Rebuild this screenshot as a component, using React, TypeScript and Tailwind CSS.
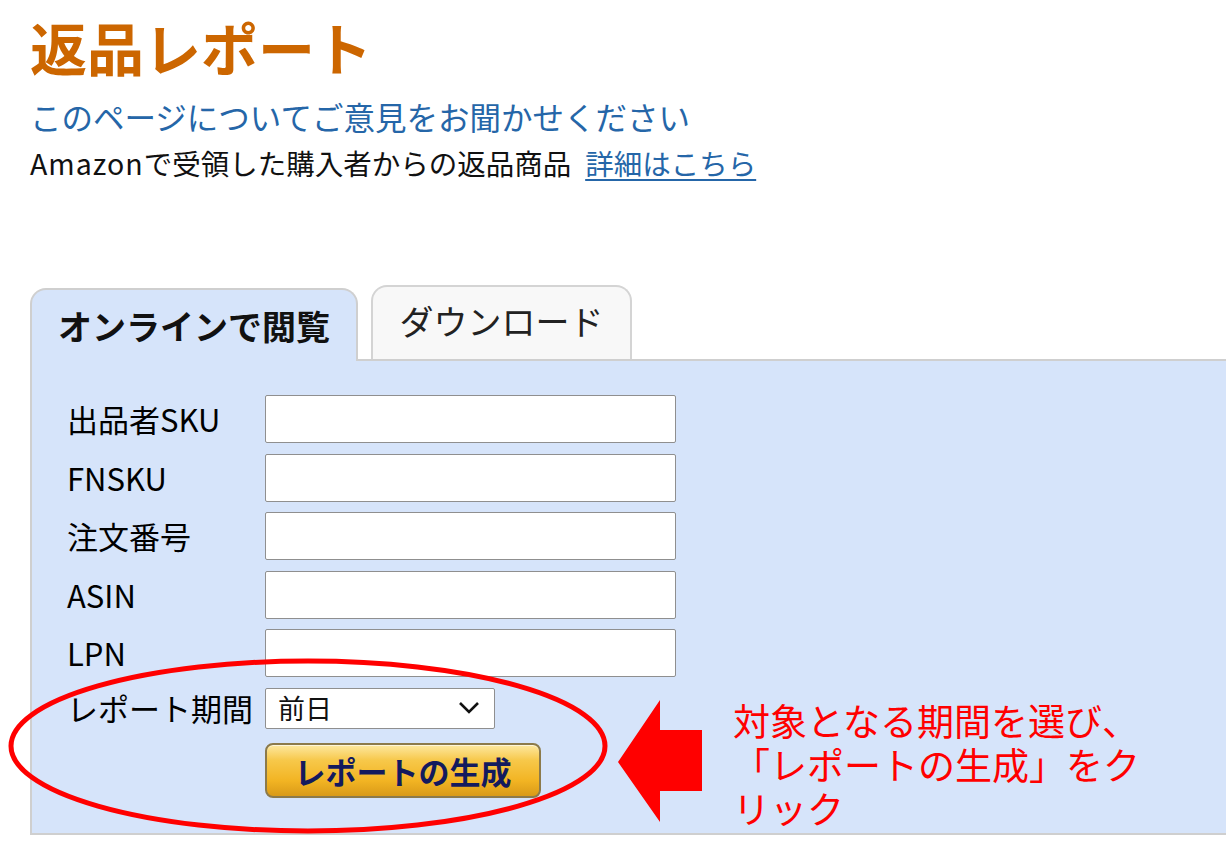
import React from "react";

const jp = "font-['Noto_Sans_CJK_JP','Noto_Sans',sans-serif]";

const fields = ["出品者SKU", "FNSKU", "注文番号", "ASIN", "LPN"];

function Annotation() {
  return (
    <svg
      className="pointer-events-none absolute left-0 top-0"
      width={1226}
      height={863}
      viewBox="0 0 1226 863"
    >
      {/* 期間と生成ボタンを囲む楕円 */}
      <ellipse cx={308} cy={746} rx={297} ry={85} fill="none" stroke="#ff0000" strokeWidth={5} />
      {/* 左向き矢印 */}
      <polygon points="618,762 660,700 660,730 702,730 702,791 660,791 660,822" fill="#ff0000" />
    </svg>
  );
}

export default function App() {
  return (
    <div className={`relative h-[863px] w-[1226px] overflow-hidden bg-white ${jp}`}>
      <div className="pl-[30px] pt-[10px]">
        <h1 className="text-[57px] font-bold leading-[72px] text-[#cc6600]">返品レポート</h1>
        <p className="mt-[14px] text-[31.5px] leading-[40px] text-[#2566a8]">
          このページについてご意見をお聞かせください
        </p>
        <p className="mt-[8px] text-[28.5px] leading-[38px] text-[#111]">
          <span className="tracking-[1px]">Amazon</span>で受領した購入者からの返品商品
          <a className="ml-[14px] text-[#2566a8] underline underline-offset-4">詳細はこちら</a>
        </p>
      </div>

      <div className="mt-[103px] pl-[30px]">
        {/* タブ */}
        <div className="flex items-end gap-[13px]">
          <div className="-mb-[2px] flex h-[73px] w-[328px] items-center justify-center rounded-t-[16px] border-2 border-b-0 border-[#cfcfcf] bg-[#d6e4fa] text-[34px] font-bold text-[#111]">
            オンラインで閲覧
          </div>
          <div className="flex h-[74px] w-[261px] items-center justify-center rounded-t-[16px] border-2 border-b-0 border-[#d4d4d4] bg-[#f8f8f8] pb-[6px] text-[34px] text-[#222]">
            ダウンロード
          </div>
        </div>

        {/* パネル */}
        <div className="h-[476px] border-y-2 border-l-2 border-[#cfcfcf] bg-[#d6e4fa] pl-[35px] pt-[34px]">
          <div className="grid grid-cols-[198px_411px] gap-y-[10.5px]">
            {fields.map((f) => (
              <React.Fragment key={f}>
                <div className="flex items-center text-[31px] leading-[40px] text-black">{f}</div>
                <input
                  className="h-[48px] rounded-[2px] border border-[#8f8f8f] bg-white px-2 text-[20px] outline-none"
                  aria-label={f}
                />
              </React.Fragment>
            ))}
            <div className="flex items-center text-[31px] leading-[40px] text-black">レポート期間</div>
            <div className="flex h-[41px] w-[230px] items-center justify-between rounded-[2px] border border-[#8f8f8f] bg-white pl-[12px] pr-[14px] text-[27px] leading-[36px] text-[#111]">
              <span>前日</span>
              <svg width="22" height="14" viewBox="0 0 22 14">
                <path d="M2 2 L11 11 L20 2" fill="none" stroke="#111" strokeWidth="2.6" />
              </svg>
            </div>
            <div />
            <button className="mt-[4px] flex h-[55px] w-[276px] items-center justify-center rounded-[8px] border-2 border-[#8c7a4a] bg-[linear-gradient(#fde8a0_0%,#f7c84a_30%,#f2b423_70%,#d99a18_100%)] text-[31px] font-bold leading-[40px] text-[#131a5e] shadow-[inset_0_1px_0_rgba(255,255,255,0.6)]">
              レポートの生成
            </button>
          </div>
        </div>
      </div>

      <Annotation />

      <div className="absolute left-[733px] top-[698px] text-[37px] leading-[44px] text-[#ff0000]">
        対象となる期間を選び、
        <br />
        「レポートの生成」をク
        <br />
        リック
      </div>
    </div>
  );
}
